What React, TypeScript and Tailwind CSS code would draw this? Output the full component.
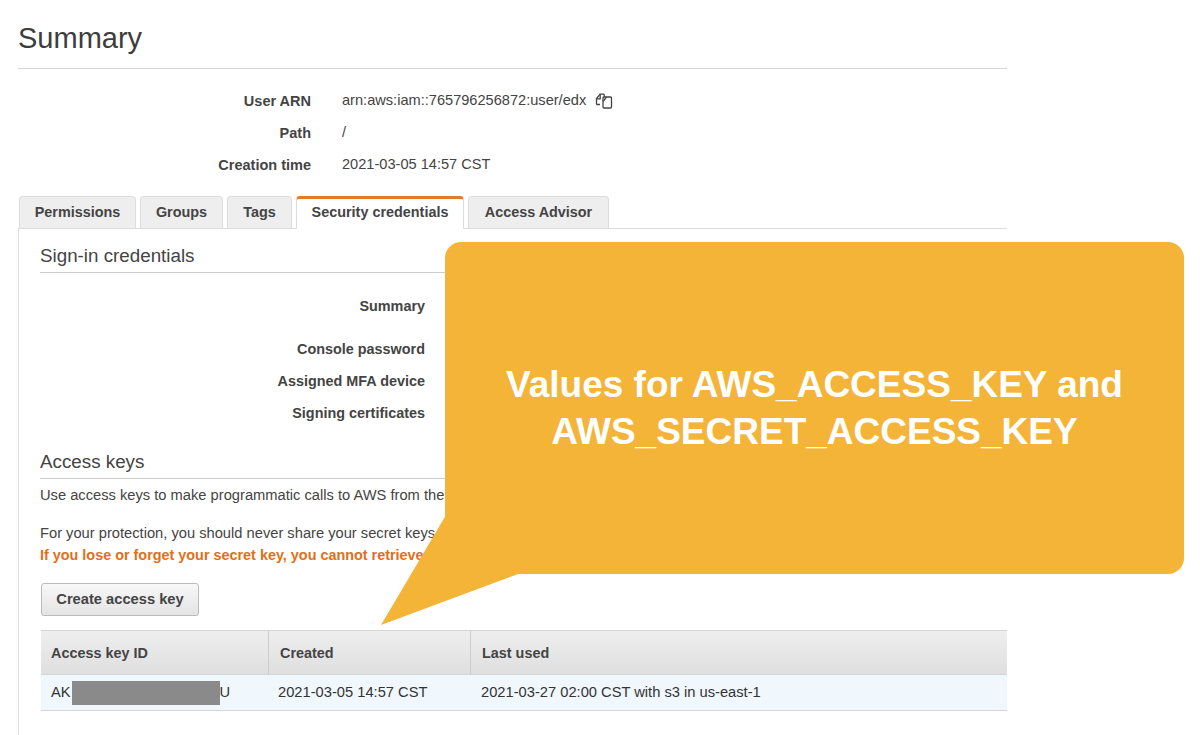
const font = { fontFamily: '"Liberation Sans", Arial, sans-serif' };

function CopyIcon() {
  return (
    <svg width="18" height="16" viewBox="0 0 18 16" fill="none" stroke="#444" strokeWidth="1.3" className="ml-[9px]">
      <path d="M5 11.5H2.2a.8.8 0 0 1-.7-.8V5.5L5.2 1.2h3.2a.8.8 0 0 1 .8.8v2" />
      <path d="M1.6 5.8h3.6V1.4" />
      <rect x="8" y="4" width="8.5" height="11" rx="1" fill="#fff" />
      <path d="M8 8.5 11.5 4.2" />
    </svg>
  );
}

function MetaRow({ label, children }: { label: string; children: React.ReactNode }) {
  return (
    <div className="flex h-8 items-center">
      <div className="w-[293px] pt-px text-right text-[14.5px] font-bold text-[#444]">{label}</div>
      <div className="ml-[31px] flex items-center text-[14.6px] text-[#444]">{children}</div>
    </div>
  );
}

function Tab({ label, width, active }: { label: string; width: string; active?: boolean }) {
  return active ? (
    <div className={`${width} -mb-px flex h-[33px] items-center justify-center rounded-t-[4px] border-x border-t-[3px] border-x-[#ddd] border-t-[#e07b2c] bg-white pb-[2px] text-[14.4px] font-bold text-[#444]`}>
      {label}
    </div>
  ) : (
    <div className={`${width} flex h-[32px] items-center justify-center rounded-t-[4px] border-x border-t border-[#ddd] bg-[#eee] text-[14.4px] font-bold text-[#444]`}>
      {label}
    </div>
  );
}

function CredRow({ label }: { label: string }) {
  return (
    <div className="flex h-[32px] items-center">
      <div className="w-[385px] pt-px text-right text-[14.4px] font-bold text-[#444]">{label}</div>
    </div>
  );
}

export default function App() {
  return (
    <div style={font} className="relative h-[735px] w-[1200px] overflow-hidden bg-white">
      <div className="ml-[18px] w-[989px]">
        <div className="flex h-[69px] items-start border-b border-[#d5d5d5] pt-[19px] text-[29px] leading-[38px] text-[#3d3d3d]">
          Summary
        </div>
        <div className="pt-[16px]">
          <MetaRow label="User ARN">
            arn:aws:iam::765796256872:user/edx
            <CopyIcon />
          </MetaRow>
          <MetaRow label="Path">/</MetaRow>
          <MetaRow label="Creation time">2021-03-05 14:57 CST</MetaRow>
        </div>
        <div className="mt-[15px] flex gap-[4px] border-b border-[#ddd] pl-px">
          <Tab label="Permissions" width="w-[117px]" />
          <Tab label="Groups" width="w-[83px]" />
          <Tab label="Tags" width="w-[65px]" />
          <Tab label="Security credentials" width="w-[168px]" active />
          <Tab label="Access Advisor" width="w-[141px]" />
        </div>
        <div className="h-[510px] border-l border-[#ddd] pl-[21px]">
          <div className="flex h-[44px] items-end border-b border-[#ccc] pb-[4px] text-[18.8px] leading-[24px] text-[#444]">
            Sign-in credentials
          </div>
          <div className="mt-[17px]">
            <CredRow label="Summary" />
          </div>
          <div className="mt-[11px]">
            <CredRow label="Console password" />
            <CredRow label="Assigned MFA device" />
            <CredRow label="Signing certificates" />
          </div>
          <div className="mt-[21px] flex h-[29px] items-end border-b border-[#ccc] pb-[4px] text-[18.8px] leading-[24px] text-[#444]">
            Access keys
          </div>
          <div className="mt-[7px] text-[14.7px] leading-[18px] text-[#444]">
            Use access keys to make programmatic calls to AWS from the AWS CLI.
          </div>
          <div className="mt-[20px] text-[14.7px] leading-[18px] text-[#444]">
            For your protection, you should never share your secret keys with anyone.
          </div>
          <div className="mt-[4px] text-[14.4px] font-bold leading-[18px] text-[#e0701a]">
            If you lose or forget your secret key, you cannot retrieve it.
          </div>
          <div className="ml-px mt-[19px] flex h-[33px] w-[158px] items-center justify-center rounded-[3px] border border-[#bbb] bg-gradient-to-b from-[#f8f8f8] to-[#e4e4e4] text-[14.7px] font-bold text-[#444]">
            Create access key
          </div>
          <div className="ml-px mt-[14px]">
            <div className="flex h-[45px] items-center border-y border-[#d5d5d5] bg-gradient-to-b from-[#eee] to-[#dfdfdf] text-[14.4px] font-bold text-[#444]">
              <div className="flex h-full w-[228px] items-center border-r border-[#ccc] pl-[10px] pt-[2px]">Access key ID</div>
              <div className="flex h-full w-[202px] items-center border-r border-[#ccc] pl-[11px] pt-[2px]">Created</div>
              <div className="pl-[11px] pt-[2px]">Last used</div>
            </div>
            <div className="flex h-[36px] items-center border-b border-[#d5d5d5] bg-[#f0f8fe] text-[14.7px] text-[#333]">
              <div className="flex w-[228px] items-center pl-[10px]">
                AK
                <span className="ml-px h-[24px] w-[148px] bg-[#8a8a8a]" />
                U
              </div>
              <div className="w-[202px] pl-[9px]">2021-03-05 14:57 CST</div>
              <div className="pl-[10px]">2021-03-27 02:00 CST with s3 in us-east-1</div>
            </div>
          </div>
        </div>
      </div>

      <svg className="absolute left-[375px] top-[500px]" width="160" height="130" viewBox="375 500 160 130">
        <polygon points="446,515 381,625 521,573 521,510" fill="#f3b437" />
      </svg>
      <div className="absolute left-[445px] top-[242px] flex h-[332px] w-[739px] items-start justify-center rounded-[16px] bg-[#f3b437] pt-[119px] text-center text-[37px] font-bold leading-[47px] text-white">
        <div>
          Values for AWS_ACCESS_KEY and
          <br />
          AWS_SECRET_ACCESS_KEY
        </div>
      </div>
    </div>
  );
}
